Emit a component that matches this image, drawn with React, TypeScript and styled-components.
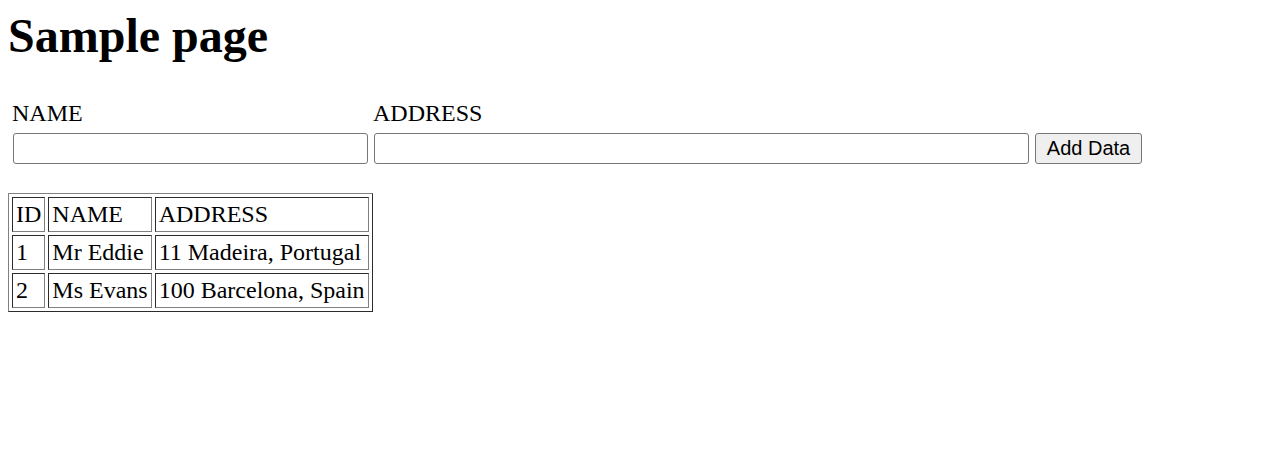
import React, { useState } from "react";
import styled, { createGlobalStyle } from "styled-components";

const GlobalStyle = createGlobalStyle`
  body {
    margin: 8px;
    background: #ffffff;
    color: #000000;
    font-family: "Liberation Serif", "Times New Roman", serif;
    font-size: 24px;
  }
`;

const Title = styled.h1`
  margin: 0 0 32px 0;
  font-size: 48px;
  font-weight: bold;
  line-height: normal;
`;

const Form = styled.form`
  display: grid;
  grid-template-columns: 355px 655px auto;
  column-gap: 6px;
  row-gap: 6px;
  align-items: end;
  padding: 5px 0 0 5px;
  margin: 0 0 29px 0;
`;

const Label = styled.label`
  margin-left: -1px;
  font-size: 24px;
  line-height: normal;
`;

const TextInput = styled.input`
  box-sizing: border-box;
  width: 100%;
  height: 31px;
  margin: 0;
  padding: 1px 3px;
  border: 1px solid #767676;
  border-radius: 3px;
  background: #ffffff;
  font-family: "Liberation Sans", Arial, sans-serif;
  font-size: 20px;
`;

const Button = styled.button`
  box-sizing: border-box;
  justify-self: start;
  width: 107px;
  height: 31px;
  margin: 0;
  padding: 0;
  border: 1px solid #767676;
  border-radius: 3px;
  background: #efefef;
  color: #000000;
  font-family: "Liberation Sans", Arial, sans-serif;
  font-size: 20px;
`;

const DataTable = styled.table`
  border-collapse: separate;
  border-spacing: 3px;
  border: 1px outset grey;
  font-size: 24px;
`;

const Cell = styled.td`
  border: 1px inset grey;
  padding: 3px;
  line-height: normal;
  text-align: left;
  white-space: nowrap;
`;

type Person = { id: number; name: string; address: string };

const initial: Person[] = [
  { id: 1, name: "Mr Eddie", address: "11 Madeira, Portugal" },
  { id: 2, name: "Ms Evans", address: "100 Barcelona, Spain" },
];

export default function App() {
  const [rows, setRows] = useState<Person[]>(initial);
  const [name, setName] = useState("");
  const [address, setAddress] = useState("");

  const addData = (e: React.FormEvent) => {
    e.preventDefault();
    if (!name && !address) return;
    setRows([...rows, { id: rows.length + 1, name, address }]);
    setName("");
    setAddress("");
  };

  return (
    <>
      <GlobalStyle />
      <Title>Sample page</Title>
      <Form onSubmit={addData}>
        <Label htmlFor="name">NAME</Label>
        <Label htmlFor="address">ADDRESS</Label>
        <span />
        <TextInput id="name" value={name} onChange={(e) => setName(e.target.value)} />
        <TextInput id="address" value={address} onChange={(e) => setAddress(e.target.value)} />
        <Button type="submit">Add Data</Button>
      </Form>
      <DataTable>
        <tbody>
          <tr>
            <Cell>ID</Cell>
            <Cell>NAME</Cell>
            <Cell>ADDRESS</Cell>
          </tr>
          {rows.map((r) => (
            <tr key={r.id}>
              <Cell>{r.id}</Cell>
              <Cell>{r.name}</Cell>
              <Cell>{r.address}</Cell>
            </tr>
          ))}
        </tbody>
      </DataTable>
    </>
  );
}
